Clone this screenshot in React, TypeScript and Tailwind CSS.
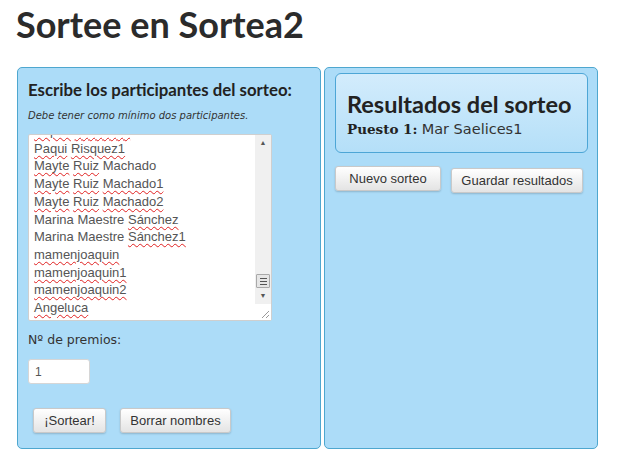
const participantes: { words: { t: string; bad?: boolean }[] }[] = [
  { words: [{ t: "Pepita", bad: true }, { t: "Saavedra", bad: true }] },
  { words: [{ t: "Paqui", bad: true }, { t: "Risquez1", bad: true }] },
  { words: [{ t: "Mayte", bad: true }, { t: "Ruiz", bad: true }, { t: "Machado" }] },
  { words: [{ t: "Mayte", bad: true }, { t: "Ruiz", bad: true }, { t: "Machado1", bad: true }] },
  { words: [{ t: "Mayte", bad: true }, { t: "Ruiz", bad: true }, { t: "Machado2", bad: true }] },
  { words: [{ t: "Marina" }, { t: "Maestre" }, { t: "Sánchez", bad: true }] },
  { words: [{ t: "Marina" }, { t: "Maestre" }, { t: "Sánchez1", bad: true }] },
  { words: [{ t: "mamenjoaquin", bad: true }] },
  { words: [{ t: "mamenjoaquin1", bad: true }] },
  { words: [{ t: "mamenjoaquin2", bad: true }] },
  { words: [{ t: "Angeluca", bad: true }] },
];

function Boton({ children, className = "" }: { children: React.ReactNode; className?: string }) {
  return (
    <button
      type="button"
      className={`h-[25px] rounded-[3px] border border-[#c9c9c9] bg-gradient-to-b from-white to-[#e4e4e4] text-[13px] text-[#333] shadow-[0_1px_2px_rgba(0,0,0,0.18)] font-['Liberation_Sans',Arial,sans-serif] ${className}`}
    >
      {children}
    </button>
  );
}

function Textarea() {
  return (
    <div className="flex h-[187px] w-[244px] rounded-[2px] border border-[#cfcfcf] bg-white">
      <div className="flex-1 overflow-hidden pl-[5px] font-['Liberation_Sans',Arial,sans-serif] text-[13px] leading-[17.7px] text-[#555]">
        <div className="-mt-[13px]">
          {participantes.map((p, i) => (
            <div key={i} className="whitespace-nowrap">
              {p.words.map((w, j) => (
                <span key={j}>
                  {j > 0 && " "}
                  <span className={w.bad ? "underline decoration-wavy decoration-[#e02020] decoration-1 underline-offset-[2px]" : ""}>
                    {w.t}
                  </span>
                </span>
              ))}
            </div>
          ))}
        </div>
      </div>
      {/* barra de scroll */}
      <div className="flex w-[16px] flex-col bg-[#f0f0f0]">
        <div className="flex h-[16px] items-center justify-center text-[7px] text-[#555]">▲</div>
        <div className="flex-1" />
        <div className="mx-[1px] flex h-[14px] flex-col items-center justify-center gap-[2px] rounded-[1px] border border-[#a9a9a9] bg-[#e6e6e6]">
          <div className="h-px w-[7px] bg-[#555]" />
          <div className="h-px w-[7px] bg-[#555]" />
          <div className="h-px w-[7px] bg-[#555]" />
        </div>
        <div className="flex h-[16px] items-center justify-center text-[7px] text-[#555]">▼</div>
        <div className="flex h-[16px] items-end justify-end bg-white pb-[2px] pr-[2px]">
          <svg width="7" height="7" viewBox="0 0 7 7">
            <path d="M7 0 L0 7 M7 4 L4 7" stroke="#999" strokeWidth="1" />
          </svg>
        </div>
      </div>
    </div>
  );
}

export default function App() {
  return (
    <div className="h-[465px] w-[640px] bg-white text-[#333]">
      <h1 className="pl-[16px] pt-[4px] font-['Lato',sans-serif] text-[36px] font-bold leading-[40px] text-[#2b2b2b]">
        Sortee en Sortea2
      </h1>

      <div className="mt-[23px] flex gap-[3px] pl-[17px]">
        {/* Lado izquierdo */}
        <div className="flex h-[382px] w-[304px] flex-col rounded-[5px] border border-[#4ea7cf] bg-[#acdcf8] px-[10px] pt-[12px]">
          <h2 className="font-['Lato',sans-serif] text-[16.8px] font-bold leading-[20px] text-[#222]">
            Escribe los participantes del sorteo:
          </h2>
          <p className="mt-[9px] font-['DejaVu_Sans',sans-serif] text-[10px] italic leading-[14px] text-[#333]">
            Debe tener como mínimo dos participantes.
          </p>
          <div className="mt-[11px]">
            <Textarea />
          </div>
          <label className="mt-[11px] font-['DejaVu_Sans',sans-serif] text-[12.5px] leading-[16px] text-[#333]">
            Nº de premios:
          </label>
          <div className="mt-[11px] flex h-[25px] w-[62px] items-center rounded-[3px] border border-[#d6d6d6] bg-white pl-[6px] font-['Liberation_Sans',Arial,sans-serif] text-[12px] text-[#555]">
            1
          </div>
          <div className="mt-[24px] flex gap-[14px] pl-[5px]">
            <Boton className="w-[73px]">¡Sortear!</Boton>
            <Boton className="w-[111px]">Borrar nombres</Boton>
          </div>
        </div>

        {/* Lado derecho */}
        <div className="flex h-[382px] w-[274px] flex-col rounded-[5px] border border-[#4ea7cf] bg-[#acdcf8] pl-[10px] pt-[5px]">
          <div className="h-[80px] w-[253px] rounded-[6px] border border-[#4da6d6] bg-gradient-to-b from-[#d3ecfc] to-[#b4dff8] px-[11px] pt-[17px]">
            <h3 className="font-['Lato',sans-serif] text-[23.5px] font-bold leading-[26px] text-[#222]">
              Resultados del sorteo
            </h3>
            <p className="mt-[2px] leading-[18px]">
              <span className="font-['DejaVu_Serif',Georgia,serif] text-[13.5px] font-bold text-[#222]">Puesto 1:</span>{" "}
              <span className="font-['DejaVu_Sans',sans-serif] text-[14.5px] text-[#333]">Mar Saelices1</span>
            </p>
          </div>
          <div className="mt-[13px] flex items-start gap-[10px]">
            <Boton className="w-[106px]">Nuevo sorteo</Boton>
            <Boton className="mt-[2px] w-[132px]">Guardar resultados</Boton>
          </div>
        </div>
      </div>
    </div>
  );
}
